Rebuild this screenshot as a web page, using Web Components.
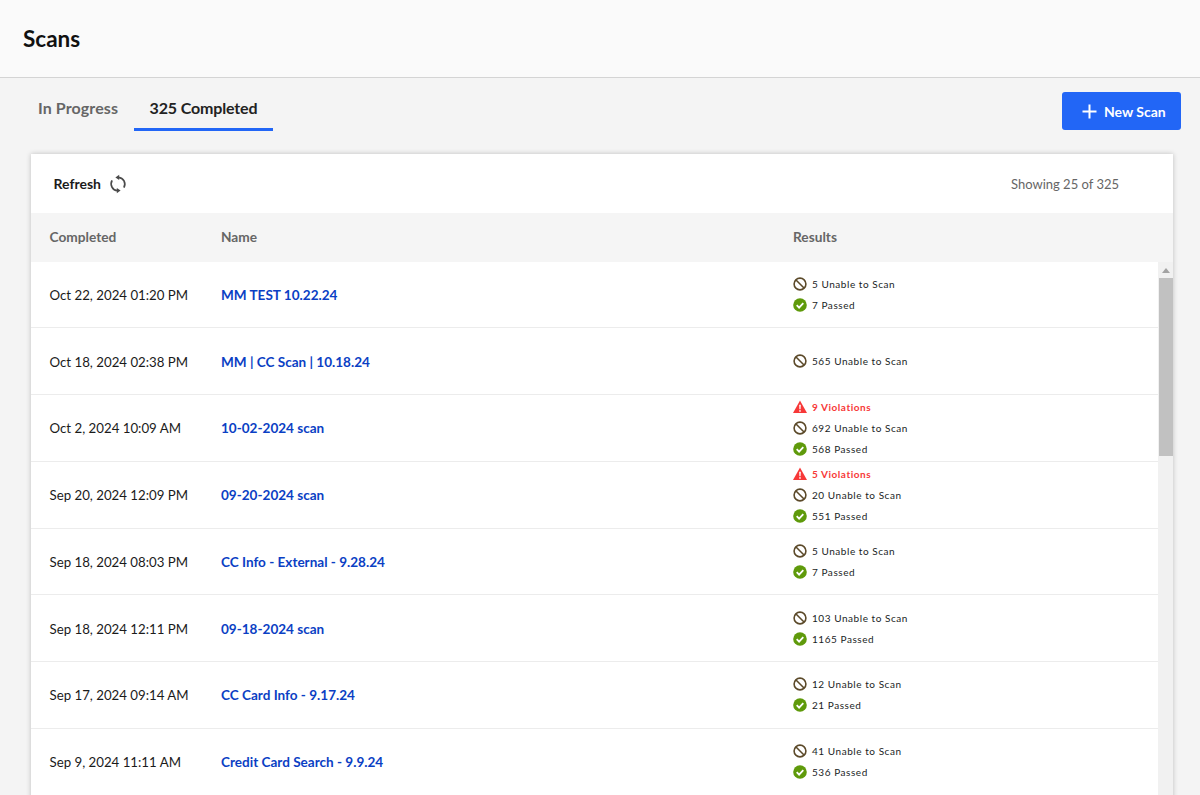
<!DOCTYPE html>
<html><head><meta charset="utf-8"><title>Scans</title>
<style>
html,body{margin:0;height:795px;overflow:hidden;background:#f4f4f4;font-family:Lato,"Noto Sans",sans-serif}
</style></head><body>
<scan-page></scan-page>
<script>
const ICONS={
 block:`<svg viewBox="0 0 14 14" width="14" height="14"><circle cx="7" cy="7" r="5.9" fill="none" stroke="#5c4a2a" stroke-width="1.6"/><path d="M3 3l8 8" stroke="#5c4a2a" stroke-width="1.6"/></svg>`,
 pass:`<svg viewBox="0 0 14 14" width="14" height="14"><circle cx="7" cy="7" r="6.8" fill="#5f9a0b"/><path d="M3.7 7.2l2.4 2.4 4.2-4.4" fill="none" stroke="#fff" stroke-width="1.8"/></svg>`,
 warn:`<svg viewBox="0 0 14 14" width="14" height="14"><path d="M7 .4L14 13H0z" fill="#f73838"/><path d="M6.2 4.8h1.6l-.2 4.4H6.4z" fill="#fff"/><circle cx="7" cy="10.9" r=".85" fill="#fff"/></svg>`
};
function def(name,css,html){
 customElements.define(name,class extends HTMLElement{
  constructor(){super();this.attachShadow({mode:"open"}).innerHTML=`<style>${css}</style>${typeof html==="function"?"":html}`;}
  connectedCallback(){if(typeof html==="function"&&!this._d){this._d=1;const t=document.createElement("div");t.innerHTML=html(this);t.style.display="contents";this.shadowRoot.append(t);}}
 });
}
def("result-line",`:host{display:flex;align-items:center;gap:5px;height:21px;font-size:10px;letter-spacing:.55px;color:#1a1e25;white-space:nowrap}
:host([kind=warn]){color:#f73838;font-weight:700}svg{display:block;flex:none}span{display:block}`,
 el=>`${ICONS[el.getAttribute("kind")]}<span><slot></slot></span>`);
def("scan-row",`:host{display:grid;grid-template-columns:171.5px 572px 1fr;align-items:center;height:66.75px;box-sizing:border-box;border-bottom:1px solid #ececec;padding-left:18.5px;font-size:13.25px;color:#1b1b1b}
.n{color:#0b3fc4;font-weight:700;font-size:13.55px}.d,.n{padding-top:1px}.r{display:flex;flex-direction:column}`,
 el=>`<div class="d">${el.getAttribute("date")}</div><div class="n">${el.getAttribute("name")}</div><div class="r"><slot></slot></div>`);
def("scan-tab",`:host{display:block;padding:0 15.5px 0 16px;height:46px;line-height:46px;box-sizing:border-box;font-size:16px;font-weight:700;color:#666;white-space:nowrap;border-bottom:3px solid transparent}
:host([first]){letter-spacing:.1px}
:host([active]){color:#222;border-bottom-color:#2266f6;letter-spacing:-.15px;padding:0 16px}`,`<slot></slot>`);
def("new-button",`:host{display:flex;align-items:center;gap:7px;width:119px;height:38px;box-sizing:border-box;padding-left:20px;background:#2266f6;border-radius:3px;color:#fff;font-size:14px;font-weight:700}svg{display:block}`,
 `<svg width="15" height="15" viewBox="0 0 15 15"><path d="M7.5 .5v14M.5 7.5h14" stroke="#fff" stroke-width="2"/></svg><slot></slot>`);
def("fake-scrollbar",`:host{display:block;position:relative;width:15px;flex:none;background:#f1f1f1}
.a{width:0;height:0;border:4px solid transparent;border-top:0;border-bottom:5px solid #a3a3a3;margin:6px auto 0}
.t{position:absolute;top:16px;left:1px;right:0;height:178px;background:#c1c1c1}`,`<div class="a"></div><div class="t"></div>`);
def("scan-card",`:host{display:block;margin:0 27px 0 31px;background:#fff;box-shadow:0 0 5px rgba(0,0,0,.22)}
.bar{display:flex;align-items:center;justify-content:space-between;height:59px;padding:0 54px 0 22.5px;font-size:13px;color:#666}
.ref{display:flex;align-items:center;gap:7px;font-size:14px;font-weight:700;color:#1b1b1b}.ref svg{display:block}
.head{display:grid;grid-template-columns:171.5px 572px 1fr;align-items:center;height:48.5px;box-sizing:border-box;padding:0 0 2px 18.5px;background:#f5f5f5;font-size:13.7px;font-weight:700;color:#666}
.body{display:flex;height:540px;overflow:hidden}.rows{flex:1;min-width:0}`,
 `<div class="bar"><div class="ref">Refresh <svg width="20" height="20" viewBox="0 0 20 20" fill="none" stroke="#4a4a4a" stroke-width="1.7"><path d="M10.5 3.3A6.9 6.9 0 0 1 15.9 13.6"/><path d="M9.5 16.7A6.9 6.9 0 0 1 4.1 6.4"/><path d="M7.4 3.4L11.2.7v5.4z" fill="#4a4a4a" stroke="none"/><path d="M12.6 16.6L8.8 13.9v5.4z" fill="#4a4a4a" stroke="none"/></svg></div><div>Showing 25 of 325</div></div>
 <div class="head"><div>Completed</div><div>Name</div><div>Results</div></div>
 <div class="body"><div class="rows"><slot></slot></div><fake-scrollbar></fake-scrollbar></div>`);
const DATA=[
["Oct 22, 2024 01:20 PM","MM TEST 10.22.24",0,"5",7],
["Oct 18, 2024 02:38 PM","MM | CC Scan | 10.18.24",0,"565",null],
["Oct 2, 2024 10:09 AM","10-02-2024 scan",9,"692",568],
["Sep 20, 2024 12:09 PM","09-20-2024 scan",5,"20",551],
["Sep 18, 2024 08:03 PM","CC Info - External - 9.28.24",0,"5",7],
["Sep 18, 2024 12:11 PM","09-18-2024 scan",0,"103",1165],
["Sep 17, 2024 09:14 AM","CC Card Info - 9.17.24",0,"12",21],
["Sep 9, 2024 11:11 AM","Credit Card Search - 9.9.24",0,"41",536]];
def("scan-page",`:host{display:block}
header{height:78px;box-sizing:border-box;background:#fafafa;border-bottom:1px solid #d4d4d4;display:flex;align-items:center;padding-left:23px}
h1{margin:0;font-size:22.5px;font-weight:700;color:#111}
.top{display:flex;justify-content:space-between;align-items:flex-start;padding:7px 19px 0 22px;height:76px;box-sizing:border-box}
.tabs{display:flex}new-button{margin-top:7px}`,
 ()=>`<header><h1>Scans</h1></header><div class="top"><div class="tabs"><scan-tab first>In Progress</scan-tab><scan-tab active>325 Completed</scan-tab></div><new-button>New Scan</new-button></div>
 <scan-card>${DATA.map(d=>`<scan-row date="${d[0]}" name="${d[1]}">${d[2]?`<result-line kind="warn">${d[2]} Violations</result-line>`:""}<result-line kind="block">${d[3]} Unable to Scan</result-line>${d[4]!==null?`<result-line kind="pass">${d[4]} Passed</result-line>`:""}</scan-row>`).join("")}</scan-card>`);
</script></body></html>
